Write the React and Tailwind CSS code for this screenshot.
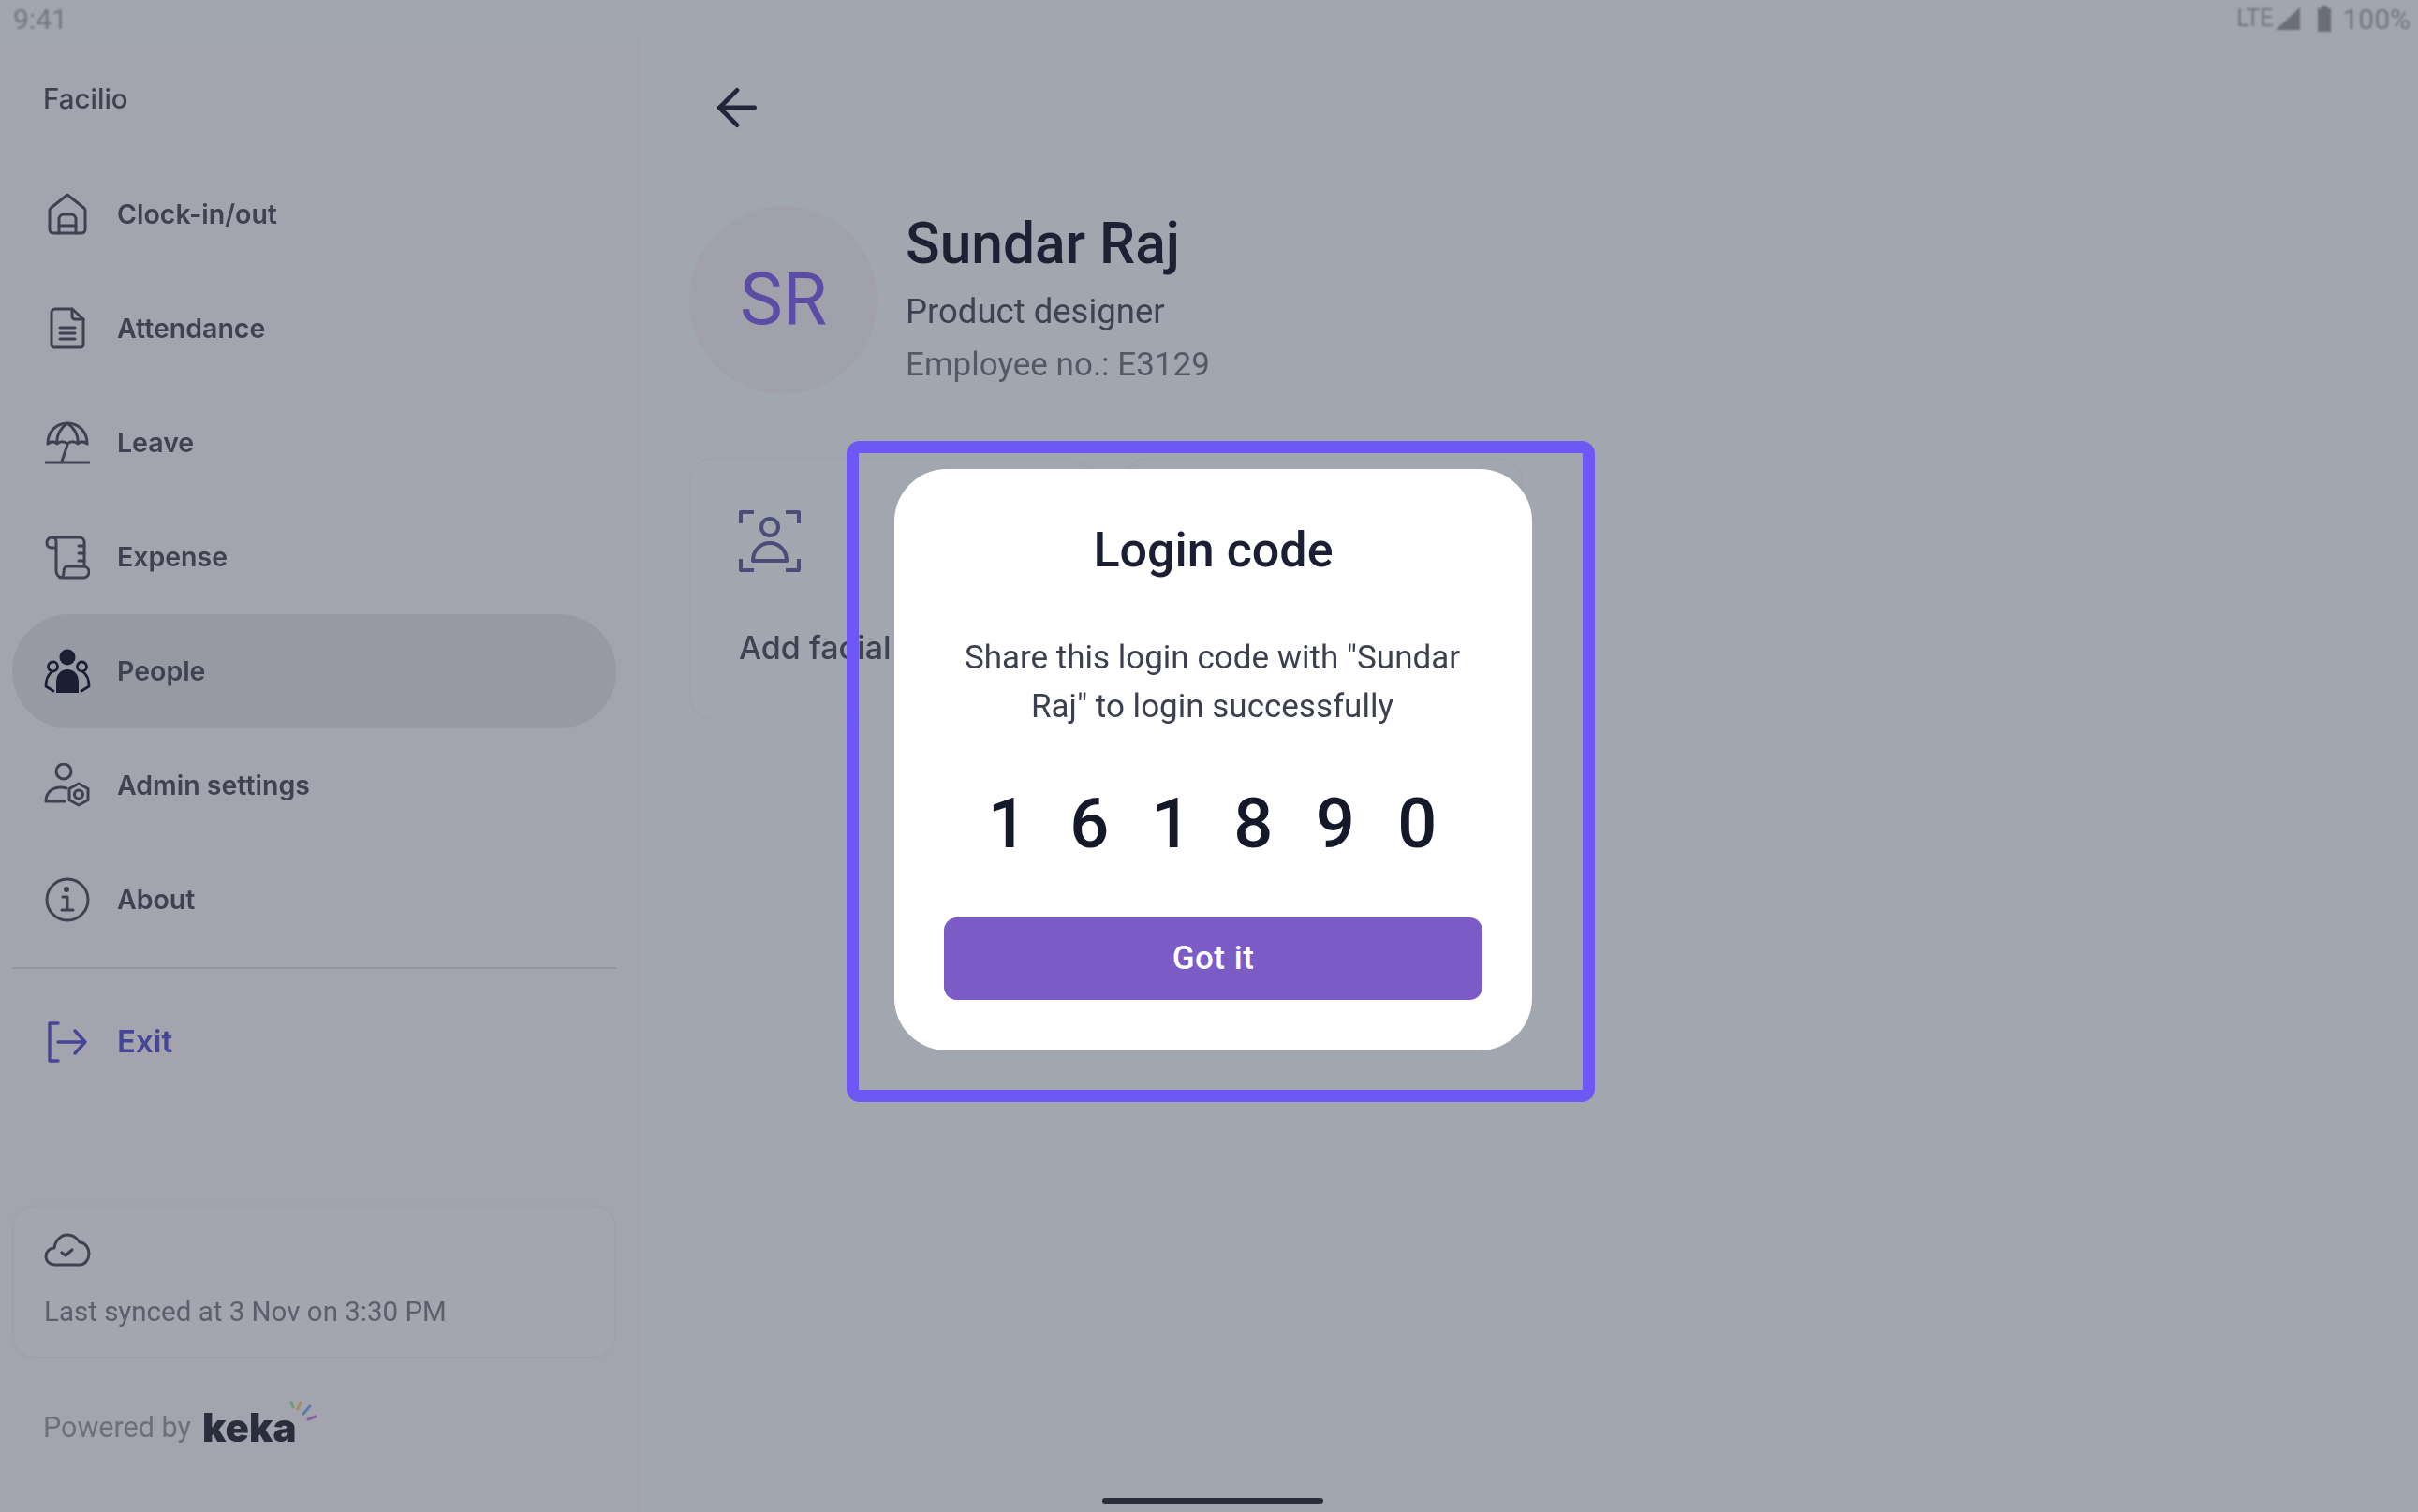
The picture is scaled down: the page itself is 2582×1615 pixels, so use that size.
import { ArrowLeft } from 'lucide-react';

const strokeProps = {
    fill: 'none',
    stroke: 'currentColor',
    strokeWidth: 3,
    strokeLinecap: 'round',
    strokeLinejoin: 'round',
};

function HomeIcon() {
    return (
        <svg viewBox="0 0 48 48" className="w-12 h-12" {...strokeProps}>
            <path d="M5 20a4 4 0 0 1 1.500-3L24 3l17.500 14a4 4 0 0 1 1.500 3v20a4 4 0 0 1-4 4H9a4 4 0 0 1-4-4z" />
            <path d="M15 44V29a5 5 0 0 1 5-5h8a5 5 0 0 1 5 5v15" />
            <path d="M15 36h18" />
        </svg>
    );
}

function DocIcon() {
    return (
        <svg viewBox="0 0 48 48" className="w-12 h-12" {...strokeProps}>
            <path d="M11 3h18l12 11v27a3 3 0 0 1-3 3H10a3 3 0 0 1-3-3V7a4 4 0 0 1 4-4z" />
            <path d="M29 3v8a3 3 0 0 0 3 3h9" />
            <path d="M16 23h16M16 29h16M16 35h16" />
        </svg>
    );
}

function UmbrellaIcon() {
    return (
        <svg viewBox="0 0 48 48" className="w-12 h-12" {...strokeProps}>
            <path d="M3 25C3 12 12 3 24 3s21 9 21 22c-4-3-7-3-10 0-3-3-8-3-11 0-3-3-8-3-11 0-3-3-6-3-10 0z" />
            <path d="M13 24c-1-9 5-17 11-21 6 4 12 12 11 21" />
            <path d="M24 26l-6 18" />
            <path d="M1 45h46" />
        </svg>
    );
}

function ScrollIcon() {
    return (
        <svg viewBox="0 0 48 48" className="w-12 h-12" {...strokeProps}>
            <path d="M8 3h29a5 5 0 0 1 5 5v26" />
            <path d="M8 3a5.500 5.500 0 0 0-6 6c0 3 2 5 5 5h3" />
            <path d="M8 3c4 0 4 3 4 6v30c0 4 3 7 7 7h22a6 6 0 0 0 6-6c0-4-3-6-6-6H24c-3 0-4 3-4 6s-1 6-4 6" />
            <path d="M36 12h6M36 20h6M36 28h6" />
        </svg>
    );
}

function PeopleIcon() {
    return (
        <svg viewBox="0 0 50 48" className="w-[50px] h-12 text-[#1c1f33]">
            <circle cx="25" cy="9" r="8.500" fill="currentColor" />
            <path d="M13 47V36c0-9 5-14 12-14s12 5 12 14v11z" fill="currentColor" />
            <g {...strokeProps} strokeWidth="2.800">
                <path d="M9 14a5 5 0 1 1 1 10 5 5 0 0 1-1-10zM41 14a5 5 0 1 0-1 10 5 5 0 0 0 1-10z" />
                <path d="M8 25c-4 3-6 9-6 15l8 5M42 25c4 3 6 9 6 15l-8 5" />
            </g>
        </svg>
    );
}

function AdminIcon() {
    return (
        <svg viewBox="0 0 50 48" className="w-[50px] h-12" {...strokeProps}>
            <circle cx="21" cy="9" r="8" />
            <path d="M24 27c-2-.5-4-1-6-1C8 26 2 32 2 41h20" />
            <path d="M37 22l10 5.500v12L37 45l-10-5.500v-12z" />
            <circle cx="37" cy="33.500" r="4.500" />
        </svg>
    );
}

function InfoIcon() {
    return (
        <svg viewBox="0 0 48 48" className="w-12 h-12" {...strokeProps}>
            <circle cx="24" cy="24" r="22" />
            <circle cx="23" cy="13" r="1.500" fill="currentColor" />
            <path d="M19 21h5v14M18 35h12" />
        </svg>
    );
}

function ExitIcon() {
    return (
        <svg viewBox="0 0 48 48" className="w-12 h-12 text-[#46459a]" {...strokeProps} strokeWidth="3.400">
            <path d="M14 4H5v40h9" />
            <path d="M14 24h29M32 12l11 12-11 12" />
        </svg>
    );
}

function CloudIcon() {
    return (
        <svg viewBox="0 0 50 36" className="w-[50px] h-9" {...strokeProps}>
            <path d="M12 34C6 34 2 30 2 25c0-5 4-9 9-9 1-8 7-14 14-14 6 0 10 3 13 8 6 0 10 6 10 12s-4 12-10 12z" />
            <path d="M19 21l4 3 7-6" strokeWidth="3.200" />
        </svg>
    );
}

function KekaRays() {
    return (
        <svg viewBox="0 0 32 28" className="w-8 h-7 absolute -right-[24px] -top-3">
            <g strokeWidth="3" strokeLinecap="round">
                <path d="M3 3l2 5" stroke="#6f9a7c" />
                <path d="M13 3l-3 7" stroke="#a68f55" />
                <path d="M23 7l-7 8" stroke="#5a7fa6" />
                <path d="M29 18l-8 3" stroke="#8464a6" />
            </g>
        </svg>
    );
}

const navItems = [
    { name: 'Clock-in/out', icon: HomeIcon },
    { name: 'Attendance', icon: DocIcon },
    { name: 'Leave', icon: UmbrellaIcon },
    { name: 'Expense', icon: ScrollIcon },
    { name: 'People', icon: PeopleIcon, active: true },
    { name: 'Admin settings', icon: AdminIcon },
    { name: 'About', icon: InfoIcon },
];

const codeDigits = ['1', '6', '1', '8', '9', '0'];

export default function App() {
    return (
        <div className="relative w-[2582px] h-[1615px] overflow-hidden bg-[#a2a6ae] font-['Inter',sans-serif]">
            {/* Status bar */}
            <div className="h-10 flex items-center justify-between pl-[14px] pr-2 text-[#74767d] font-['Roboto',sans-serif] text-[30px] blur-[0.8px]">
                <span>9:41</span>
                <div className="flex items-center">
                    <span className="text-[25px] mr-[3px]">LTE</span>
                    <svg viewBox="0 0 26 24" className="w-[26px] h-6 mr-[19px]">
                        <path d="M0 24L26 0v24z" fill="#6c6e75" />
                    </svg>
                    <svg viewBox="0 0 14 28" className="w-[14px] h-7 mr-[12px]">
                        <path d="M4 0h6v3h4v25H0V3h4z" fill="#6c6e75" />
                    </svg>
                    <span>100%</span>
                </div>
            </div>

            <div className="flex h-[1575px]">
                {/* Sidebar */}
                <aside className="w-[682px] shrink-0 flex flex-col bg-[#a3a4ad] pl-[13px] pr-[23px] border-r border-[#a0a3ab] text-[#3f4250]">
                    <div className="h-[128px] pl-[33px] pt-[46px] text-[29.500px] leading-[38px] font-medium text-[#3f4250] blur-[0.7px]">Facilio</div>

                    <nav className="blur-[0.7px]">
                        {navItems.map((item) => (
                            <div
                                key={item.name}
                                className={`h-[122px] flex items-center pl-[34px] gap-[28px] rounded-full text-[28.500px] font-semibold ${item.active ? 'bg-[#979aa3]' : ''}`}
                            >
                                <div className="w-[50px] flex justify-center">
                                    <item.icon />
                                </div>
                                <span>{item.name}</span>
                            </div>
                        ))}
                    </nav>

                    <div className="mt-[11px] mb-[17px] border-t-2 border-[#94969f]" />

                    <div className="h-[122px] flex items-center pl-[34px] gap-[28px] text-[33px] font-semibold text-[#46459a] blur-[0.7px]">
                        <div className="w-[50px] flex justify-center">
                            <ExitIcon />
                        </div>
                        <span>Exit</span>
                    </div>

                    <div className="mt-[113px] h-[164px] rounded-[24px] border-2 border-[#9fa2aa] bg-[#a3a6ae] pl-[32px] pt-[28px] blur-[0.5px]">
                        <CloudIcon />
                        <div className="mt-[30px] text-[29.500px] leading-[36px] text-[#5c5f6c] font-['Roboto',sans-serif]">Last synced at 3 Nov on 3:30 PM</div>
                    </div>

                    <div className="mt-[56px] pl-[33px] flex items-center gap-[12px] blur-[0.7px]">
                        <span className="text-[30.500px] leading-[36px] text-[#6d707b] font-['Roboto',sans-serif]">Powered by</span>
                        <span className="relative text-[42px] leading-[36px] font-black text-[#2a2d3c]">
                            keka
                            <KekaRays />
                        </span>
                    </div>
                </aside>

                {/* Profile */}
                <main className="flex-1 pl-[54px] pt-[43px] text-[#1c1f33] blur-[0.5px]">
                    <ArrowLeft className="w-[64px] h-[64px] ml-[19px] text-[#23263a]" strokeWidth={1.800} />

                    <div className="mt-[73px] flex items-center gap-[30px]">
                        <div className="w-[201px] h-[201px] rounded-full bg-[#a1a1ac] flex items-center justify-center text-[77px] text-[#5b4da6] font-['Roboto',sans-serif]">SR</div>
                        <div className="font-['Roboto',sans-serif] -mt-[4px]">
                            <div className="text-[60.500px] leading-[70px] font-medium text-[#1e2134]">Sundar Raj</div>
                            <div className="text-[36.500px] leading-[48px] mt-[13px] text-[#3f4250]">Product designer</div>
                            <div className="text-[35px] leading-[44px] mt-[11px] text-[#555865]">Employee no.: E3129</div>
                        </div>
                    </div>

                    <div className="mt-[68px] flex gap-[34px]">
                        <div className="w-[430px] h-[280px] rounded-[24px] border-2 border-[#a0a3ab] pl-[51px] pt-[54px]">
                            <svg viewBox="0 0 66 66" className="w-[66px] h-[66px] text-[#4a4c79]" {...strokeProps} strokeWidth="4">
                                <path d="M2 14V2h14M50 2h14v12M2 52v12h14M64 52v12H50" strokeLinecap="butt" />
                                <circle cx="33" cy="18" r="9" />
                                <path d="M15 54c0-11 8-19 18-19s18 8 18 19z" />
                            </svg>
                            <div className="mt-[59px] text-[34px] leading-[44px] font-medium text-[#3f4250] whitespace-nowrap">Add facial</div>
                        </div>
                        <div className="w-[426px] h-[280px] rounded-[24px] border-2 border-[#a0a3ab]" />
                    </div>
                </main>
            </div>

            {/* Home indicator */}
            <div className="absolute left-[1177px] bottom-[9px] w-[236px] h-[6px] rounded-full bg-[#2b2d38]" />

            {/* Highlight frame */}
            <div className="absolute left-[904px] top-[471px] w-[799px] h-[706px] rounded-[14px] border-[13px] border-[#6e57f4]" />

            {/* Login code dialog */}
            <div className="absolute left-[955px] top-[501px] w-[681px] h-[621px] rounded-[56px] bg-white flex flex-col items-center pt-[57px] font-['Roboto',sans-serif]">
                <h2 className="text-[52px] leading-[60px] font-medium text-[#1c1f33] blur-[0.4px]">Login code</h2>
                <p className="mt-[59px] w-[580px] text-center text-[35px] leading-[52px] text-[#3c3f4d] blur-[0.4px] -translate-x-[1px]">
                    Share this login code with "Sundar Raj" to login successfully
                </p>
                <div className="mt-[55px] flex blur-[0.4px] -translate-x-[1px]">
                    {codeDigits.map((digit, i) => (
                        <span key={i} className="w-[87.500px] text-center text-[74px] leading-[88px] font-medium text-[#141829]">{digit}</span>
                    ))}
                </div>
                <button className="mt-[56px] w-[575px] h-[88px] rounded-[14px] bg-[#7b5cc7] text-white text-[35px] tracking-[0.5px] font-medium">Got it</button>
            </div>
        </div>
    );
}
